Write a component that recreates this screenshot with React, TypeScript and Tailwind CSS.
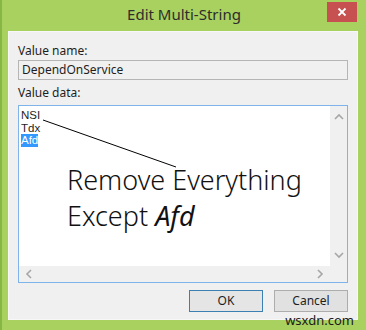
import React from "react";

const font = { fontFamily: '"Noto Sans", "Open Sans", "Liberation Sans", sans-serif' };
const listFont = { fontFamily: '"Liberation Sans", Arial, sans-serif' };

const Chevron = ({ dir }: { dir: "up" | "down" | "left" | "right" }) => {
    const d = {
        up: "M1 6 L5 2 L9 6",
        down: "M1 2 L5 6 L9 2",
        left: "M6 1 L2 5 L6 9",
        right: "M2 1 L6 5 L2 9",
    }[dir];
    const size = dir === "up" || dir === "down" ? { w: 10, h: 8 } : { w: 8, h: 10 };
    return (
        <svg width={size.w} height={size.h} viewBox={`0 0 ${size.w} ${size.h}`}>
            <path d={d} fill="none" stroke="#a6a6a6" strokeWidth="1.6" />
        </svg>
    );
};

const App = () => {
    return (
        <div
            className="relative flex h-[330px] w-[366px] flex-col bg-[#a9d15f] border-l-2 border-[#86b643] text-[#1e1e1e]"
            style={font}
        >
            {/* title bar */}
            <div className="relative flex h-[31px] flex-shrink-0 items-center justify-center">
                <span className="text-[15px] text-[#2d2d2d] pb-[2px]">Edit Multi-String</span>
                <button className="absolute right-[9px] top-[2px] flex h-[20px] w-[30px] items-center justify-center bg-[#c75050]">
                    <svg width="10" height="10" viewBox="0 0 10 10">
                        <path d="M1.5 1.5 L8.5 8.5 M8.5 1.5 L1.5 8.5" stroke="#fff" strokeWidth="1.8" />
                    </svg>
                </button>
            </div>

            {/* client area */}
            <div className="mr-[8px] ml-[6px] mb-[10px] flex flex-1 flex-col border border-[#f7f7f7] bg-[#f0f0f0] px-[9px] text-[12px]">
                <div className="mt-[11px] h-[16px] leading-[16px]">Value name:</div>
                <div className="mt-[1px] flex h-[20px] items-center border border-[#b5b5b5] bg-[#f0f0f0] px-[3px] leading-none">
                    DependOnService
                </div>
                <div className="mt-[5px] h-[16px] leading-[16px]">Value data:</div>

                <div className="relative mt-[4px] flex h-[178px] flex-col border border-[#7eb4ea] bg-white">
                    <div className="flex flex-1">
                        <div className="flex flex-1 flex-col items-start px-[2px] pt-[3px] text-[11.5px]" style={listFont}>
                            <div className="h-[12.5px] leading-[12.5px]">NSI</div>
                            <div className="h-[12.5px] leading-[12.5px]">Tdx</div>
                            <div className="h-[12.5px] bg-[#3399ff] leading-[12.5px] text-white">Afd</div>
                        </div>
                        <div className="flex w-[17px] flex-col items-center justify-between bg-[#f0f0f0] py-[7px]">
                            <Chevron dir="up" />
                            <Chevron dir="down" />
                        </div>
                    </div>
                    <div className="flex h-[16px] items-center">
                        <div className="flex h-full flex-1 items-center justify-between bg-[#f0f0f0] px-[6px]">
                            <Chevron dir="left" />
                            <Chevron dir="right" />
                        </div>
                        <div className="h-full w-[17px] bg-[#f0f0f0]" />
                    </div>

                    {/* annotation */}
                    <svg className="pointer-events-none absolute left-0 top-0" width="330" height="178">
                        <line x1="24" y1="14" x2="157" y2="61" stroke="#000" strokeWidth="1" />
                    </svg>
                    <div className="pointer-events-none absolute left-[48px] top-[56px] text-[27px] font-light leading-[36px] text-[#111]">
                        <div>Remove Everything</div>
                        <div>
                            Except <span className="italic font-normal">Afd</span>
                        </div>
                    </div>
                </div>

                <div className="mt-[7px] flex justify-end gap-[11px]">
                    <button className="h-[22px] w-[74px] border border-[#3c7fb1] bg-[#e5e5e5] text-[12px]">OK</button>
                    <button className="h-[22px] w-[74px] border border-[#adadad] bg-[#e1e1e1] text-[12px]">Cancel</button>
                </div>
            </div>

            <div className="absolute right-[12px] bottom-[3px] text-[13px] leading-none text-[#1a1a1a]">wsxdn.com</div>
        </div>
    );
};

export default App;
